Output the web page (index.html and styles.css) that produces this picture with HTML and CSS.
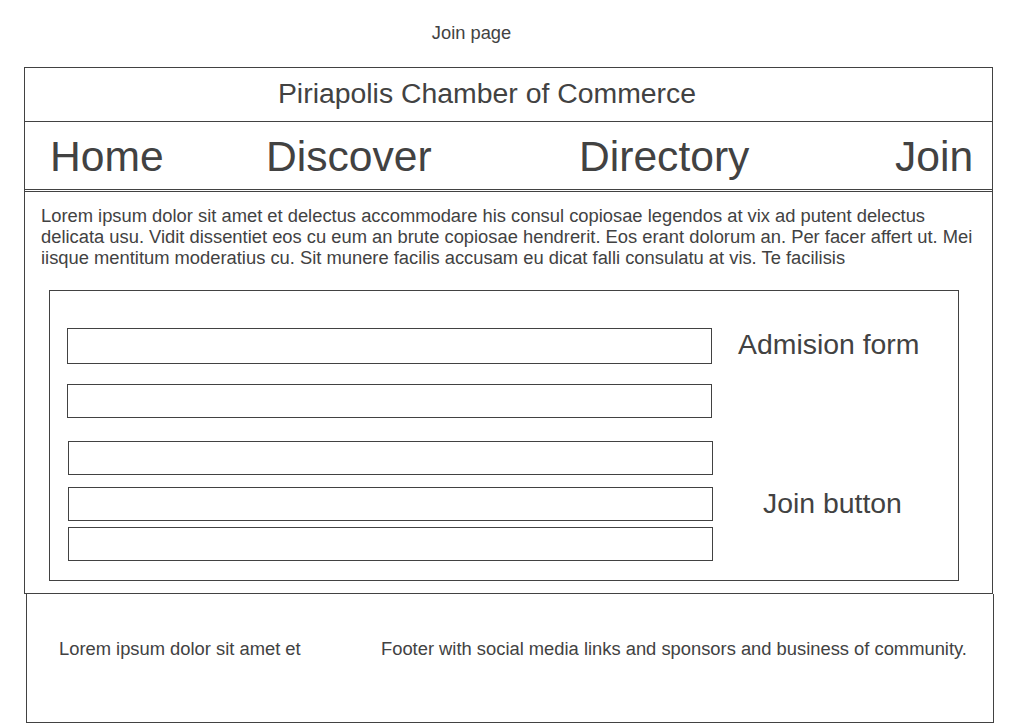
FILE: index.html
```html
<!DOCTYPE html>
<html lang="en">
<head>
<meta charset="utf-8">
<title>Join page</title>
<link rel="stylesheet" href="styles.css">
</head>
<body>
<div class="page-label">Join page</div>
<div class="frame">
  <header class="site-header">
    <div class="site-title">Piriapolis Chamber of Commerce</div>
    <nav class="site-nav">
      <a class="nav-link" href="#">Home</a>
      <a class="nav-link" href="#">Discover</a>
      <a class="nav-link" href="#">Directory</a>
      <a class="nav-link" href="#">Join</a>
    </nav>
  </header>
  <div class="spacer"></div>
  <main class="main">
    <p class="intro">Lorem ipsum dolor sit amet et delectus accommodare his consul copiosae legendos at vix ad putent delectus delicata usu. Vidit dissentiet eos cu eum an brute copiosae hendrerit. Eos erant dolorum an. Per facer affert ut. Mei iisque mentitum moderatius cu. Sit munere facilis accusam eu dicat falli consulatu at vis. Te facilisis</p>
    <form class="form-box">
      <div class="form-row row-one">
        <div class="fields">
          <input class="field field-tall" type="text">
          <input class="field gap-20" type="text">
        </div>
        <div class="form-label label-form">Admision form</div>
      </div>
      <div class="form-row row-two">
        <div class="fields">
          <input class="field" type="text">
          <input class="field gap-12" type="text">
          <input class="field gap-6" type="text">
        </div>
        <div class="form-label label-button">Join button</div>
      </div>
    </form>
  </main>
</div>
<footer class="site-footer">
  <div class="footer-left">Lorem ipsum dolor sit amet et</div>
  <div class="footer-right">Footer with social media links and sponsors and business of community.</div>
</footer>
</body>
</html>
```

FILE: styles.css
```css
* { box-sizing: border-box; }

html, body {
  margin: 0;
  padding: 0;
  background: #ffffff;
}

body {
  font-family: "Liberation Sans", Arial, sans-serif;
  color: #424242;
  width: 1024px;
}

.page-label {
  font-size: 18.3px;
  line-height: 21px;
  padding-top: 22px;
  padding-right: 81px;
  margin-bottom: 24px;
  text-align: center;
}

.frame {
  margin-left: 24px;
  width: 969px;
  border-left: 1px solid #424242;
  border-right: 1px solid #424242;
}

.site-header {
  border-top: 1px solid #424242;
  border-bottom: 1px solid #424242;
}

.site-title {
  font-size: 28.4px;
  line-height: 49px;
  height: 54px;
  padding-top: 1px;
  padding-bottom: 3px;
  padding-right: 43px;
  text-align: center;
  border-bottom: 1px solid #424242;
}

.site-nav {
  display: grid;
  grid-template-columns: 216px 313px 316px auto;
  padding-left: 25px;
  padding-top: 2px;
  height: 67px;
  font-size: 42.6px;
  line-height: 64px;
}

.nav-link {
  color: #424242;
  text-decoration: none;
  white-space: nowrap;
}

.spacer { height: 1px; }

.main {
  border-top: 1px solid #424242;
  border-bottom: 1px solid #424242;
}

.intro {
  margin: 0;
  padding: 13px 14px 0 16px;
  font-size: 18.35px;
  line-height: 21px;
}

.form-box {
  margin: 22px 33px 12px 24px;
  border: 1px solid #424242;
  padding: 37px 0 19px 0;
  height: 291px;
}

.form-row {
  display: flex;
  align-items: flex-start;
}

.row-one { margin-left: 17px; }

.row-two {
  margin-left: 18px;
  margin-top: 23px;
}

.fields {
  display: flex;
  flex-direction: column;
  width: 645px;
  flex: none;
}

.field {
  display: block;
  width: 645px;
  height: 34px;
  margin: 0;
  padding: 0;
  border: 1px solid #424242;
  border-radius: 0;
  background: #ffffff;
  font: inherit;
}

.field-tall { height: 36px; }
.gap-20 { margin-top: 20px; }
.gap-12 { margin-top: 12px; }
.gap-6 { margin-top: 6px; }

.form-label {
  font-size: 28.4px;
  line-height: 33px;
  white-space: nowrap;
}

.label-form { margin-left: 26px; }

.label-button {
  margin-left: 50px;
  margin-top: 46px;
}

.site-footer {
  display: flex;
  margin-left: 26px;
  width: 968px;
  height: 129px;
  border-left: 1px solid #424242;
  border-right: 1px solid #424242;
  border-bottom: 1px solid #424242;
  padding: 44px 0 0 32px;
  font-size: 18.35px;
  line-height: 21px;
}

.footer-left {
  width: 322px;
  flex: none;
  white-space: nowrap;
}

.footer-right { white-space: nowrap; }
```
